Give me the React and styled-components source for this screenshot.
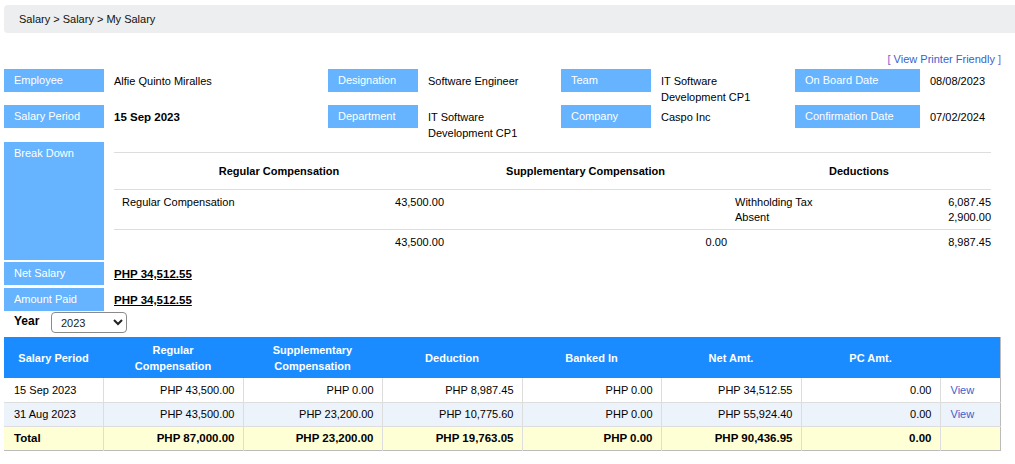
import React from "react";
import styled, { createGlobalStyle } from "styled-components";

const Global = createGlobalStyle`
  html, body { margin: 0; padding: 0; background: #fff; }
  body { font-family: "Liberation Sans", Arial, sans-serif; font-size: 11px; color: #000; }
  * { box-sizing: border-box; }
`;

const Page = styled.div`
  padding: 5px 0 0 4px;
  width: 1015px;
`;

const Breadcrumb = styled.div`
  height: 28px;
  line-height: 28px;
  background: #eceeef;
  border-radius: 4px 0 0 4px;
  padding-left: 15px;
  color: #111;
`;

const PrinterRow = styled.div`
  display: flex;
  justify-content: flex-end;
  padding-right: 14px;
  margin-top: 19px;
  height: 15px;
  line-height: 15px;
`;

const BlueLink = styled.a`
  color: #3a5fcd;
  text-decoration: none;
  cursor: pointer;
`;

const Bracket = styled.span`
  color: #7a5fd0;
`;

const InfoGrid = styled.div`
  display: grid;
  grid-template-columns: 100px 224px 90px 143px 90px 144px 125px 1fr;
  margin-top: 2px;
`;

const Label = styled.div`
  background: #66b3ff;
  color: #fff;
  height: ${(p) => p.$h || 23}px;
  line-height: 23px;
  padding-left: 10px;
`;

const Value = styled.div`
  padding: 4px 10px 0 10px;
  line-height: 16px;
  min-height: 36px;
  font-weight: ${(p) => (p.$bold ? "bold" : "normal")};
  font-size: ${(p) => (p.$bold ? "11.5px" : "11px")};
`;

const BreakRow = styled.div`
  display: flex;
  margin-top: 1px;
`;

const SideLabel = styled(Label)`
  width: 100px;
  flex: none;
`;

const BreakTable = styled.table`
  margin: 10px 0 0 10px;
  width: 877px;
  border-collapse: collapse;
  table-layout: fixed;
  align-self: flex-start;
  td, th { padding: 0 0 0 8px; }
`;

const BHead = styled.tr`
  height: 37px;
  border-top: 1px solid #ddd;
  border-bottom: 1px solid #ddd;
  th { font-weight: bold; text-align: center; padding: 0; }
`;

const BBody = styled.tr`
  height: 40px;
  border-bottom: 1px solid #ddd;
  td { vertical-align: top; padding-top: 5px; line-height: 15px; }
`;

const BTotal = styled.tr`
  height: 26px;
  td { vertical-align: top; padding-top: 6px; }
`;

const Num = styled.td`
  text-align: right;
`;

const PayRow = styled.div`
  display: flex;
  align-items: center;
  margin-top: ${(p) => p.$mt || 2}px;
`;

const PayValue = styled.div`
  padding-left: 10px;
  font-weight: bold;
  text-decoration: underline;
  font-size: 11.5px;
`;

const YearRow = styled.div`
  display: flex;
  align-items: center;
  height: 23px;
`;

const YearLabel = styled.span`
  font-weight: bold;
  font-size: 12px;
  padding-left: 10px;
  width: 47px;
  margin-top: -4px;
`;

const YearSelect = styled.select`
  width: 76px;
  height: 21px;
  font-family: "Liberation Sans", Arial, sans-serif;
  font-size: 11px;
  border: 1px solid #8a8a8a;
  border-radius: 4px;
  padding-left: 5px;
  background: #fff;
  color: #222;
`;

const MainTable = styled.table`
  margin-top: 3px;
  width: 996px;
  border-collapse: collapse;
  table-layout: fixed;
  border-right: 1px solid #bbb;
  border-bottom: 1px solid #bbb;
`;

const HeadRow = styled.tr`
  background: #1a8cff;
  height: 41px;
  th {
    color: #fff;
    font-weight: bold;
    text-align: center;
    line-height: 16px;
    padding: 0 6px;
  }
`;

const DataRow = styled.tr`
  height: 24px;
  background: ${(p) => (p.$alt ? "#ecf3fa" : "#fff")};
  border-bottom: 1px solid #ddd;
  td { border-left: 1px solid #ddd; padding: 0 8px 0 10px; }
  td:first-child { border-left: none; }
`;

const TotalRow = styled.tr`
  height: 24px;
  background: #ffffd6;
  border-top: 1px solid #aaa;
  td { border-left: 1px solid #ddd; padding: 0 8px 0 10px; font-weight: bold; font-size: 11.5px; }
  td:first-child { border-left: none; }
`;

const Amt = styled.td`
  text-align: right;
`;

const rows = [
  ["15 Sep 2023", "PHP 43,500.00", "PHP 0.00", "PHP 8,987.45", "PHP 0.00", "PHP 34,512.55", "0.00"],
  ["31 Aug 2023", "PHP 43,500.00", "PHP 23,200.00", "PHP 10,775.60", "PHP 0.00", "PHP 55,924.40", "0.00"],
];

export default function App() {
  return (
    <>
      <Global />
      <Page>
        <Breadcrumb>Salary &gt; Salary &gt; My Salary</Breadcrumb>
        <PrinterRow>
          <BlueLink>
            <Bracket>[</Bracket> View Printer Friendly <Bracket>]</Bracket>
          </BlueLink>
        </PrinterRow>
        <InfoGrid>
          <Label>Employee</Label>
          <Value>Alfie Quinto Miralles</Value>
          <Label>Designation</Label>
          <Value>Software Engineer</Value>
          <Label>Team</Label>
          <Value>IT Software<br />Development CP1</Value>
          <Label>On Board Date</Label>
          <Value>08/08/2023</Value>

          <Label>Salary Period</Label>
          <Value $bold>15 Sep 2023</Value>
          <Label>Department</Label>
          <Value>IT Software<br />Development CP1</Value>
          <Label>Company</Label>
          <Value>Caspo Inc</Value>
          <Label>Confirmation Date</Label>
          <Value>07/02/2024</Value>
        </InfoGrid>

        <BreakRow>
          <SideLabel $h={118}>Break Down</SideLabel>
          <BreakTable>
            <colgroup>
              <col style={{ width: 165 }} />
              <col style={{ width: 165 }} />
              <col style={{ width: 141 }} />
              <col style={{ width: 142 }} />
              <col style={{ width: 132 }} />
              <col style={{ width: 132 }} />
            </colgroup>
            <tbody>
              <BHead>
                <th colSpan={2}>Regular Compensation</th>
                <th colSpan={2}>Supplementary Compensation</th>
                <th colSpan={2}>Deductions</th>
              </BHead>
              <BBody>
                <td>Regular Compensation</td>
                <Num>43,500.00</Num>
                <td></td>
                <Num></Num>
                <td>Withholding Tax<br />Absent</td>
                <Num>6,087.45<br />2,900.00</Num>
              </BBody>
              <BTotal>
                <td></td>
                <Num>43,500.00</Num>
                <td></td>
                <Num>0.00</Num>
                <td></td>
                <Num>8,987.45</Num>
              </BTotal>
            </tbody>
          </BreakTable>
        </BreakRow>

        <PayRow $mt={2}>
          <SideLabel>Net Salary</SideLabel>
          <PayValue>PHP 34,512.55</PayValue>
        </PayRow>
        <PayRow $mt={3}>
          <SideLabel>Amount Paid</SideLabel>
          <PayValue>PHP 34,512.55</PayValue>
        </PayRow>

        <YearRow>
          <YearLabel>Year</YearLabel>
          <YearSelect defaultValue="2023">
            <option>2023</option>
            <option>2024</option>
          </YearSelect>
        </YearRow>

        <MainTable>
          <colgroup>
            <col style={{ width: 99 }} />
            <col style={{ width: 140 }} />
            <col style={{ width: 139 }} />
            <col style={{ width: 140 }} />
            <col style={{ width: 139 }} />
            <col style={{ width: 140 }} />
            <col style={{ width: 139 }} />
            <col style={{ width: 60 }} />
          </colgroup>
          <thead>
            <HeadRow>
              <th>Salary Period</th>
              <th>Regular<br />Compensation</th>
              <th>Supplementary<br />Compensation</th>
              <th>Deduction</th>
              <th>Banked In</th>
              <th>Net Amt.</th>
              <th>PC Amt.</th>
              <th></th>
            </HeadRow>
          </thead>
          <tbody>
            {rows.map((r, i) => (
              <DataRow key={r[0]} $alt={i % 2 === 1}>
                <td>{r[0]}</td>
                {r.slice(1).map((v, j) => (
                  <Amt key={j}>{v}</Amt>
                ))}
                <td><BlueLink>View</BlueLink></td>
              </DataRow>
            ))}
            <TotalRow>
              <td>Total</td>
              <Amt>PHP 87,000.00</Amt>
              <Amt>PHP 23,200.00</Amt>
              <Amt>PHP 19,763.05</Amt>
              <Amt>PHP 0.00</Amt>
              <Amt>PHP 90,436.95</Amt>
              <Amt>0.00</Amt>
              <td></td>
            </TotalRow>
          </tbody>
        </MainTable>
      </Page>
    </>
  );
}
